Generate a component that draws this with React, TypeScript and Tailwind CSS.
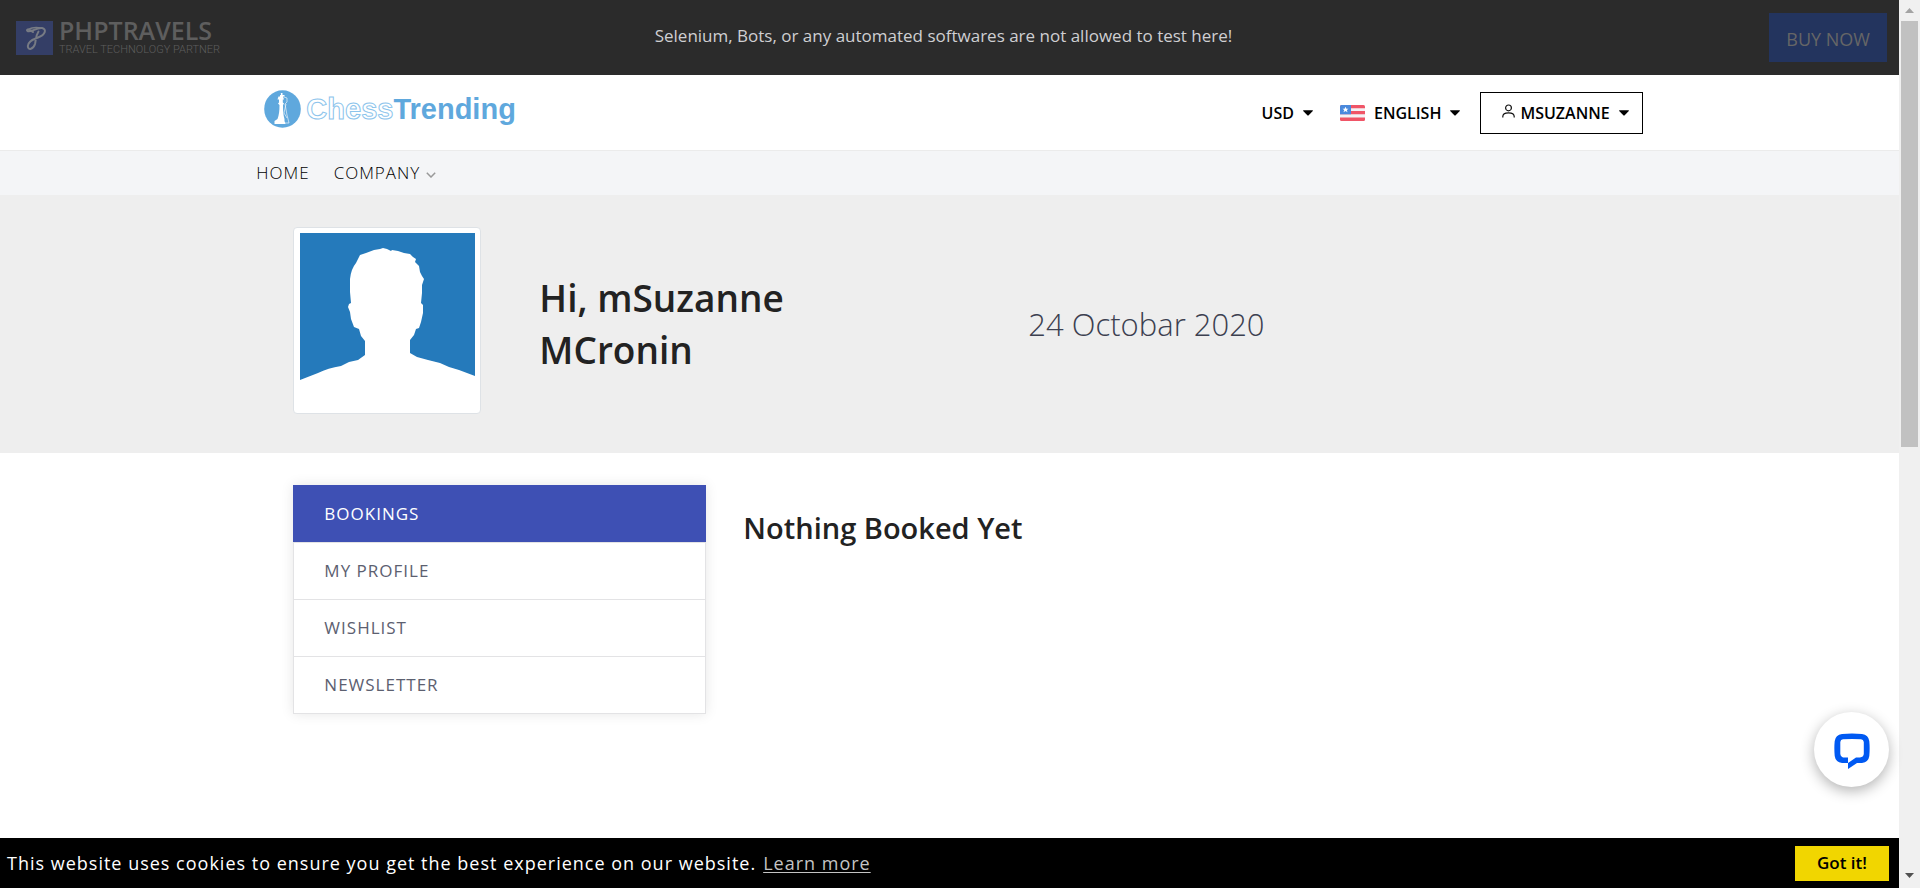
import React from "react";

function Caret() {
  return (
    <svg className="h-[6px] w-[10px]" viewBox="0 0 11 6" aria-hidden="true">
      <path d="M0.6 0h9.8c.5 0 .7.5.4.9L6.2 5.6a1 1 0 0 1-1.4 0L.2.9C-.1.5.1 0 .6 0z" fill="#000" />
    </svg>
  );
}

function PhpLogo() {
  return (
    <a href="#" className="flex items-center gap-[6px] text-[#5e5e5e]">
      <svg className="h-[34px] w-[37px]" viewBox="0 0 37 34" aria-hidden="true">
        <rect width="37" height="34" fill="#343e66" />
        <g fill="none" stroke="#777b84" strokeLinecap="round">
          <path d="M17 11C14 8 9.500 8 11.500 10C14 12 20 6.500 26 7C31 8 29.500 14 22 16.500C17 18.300 12 21 11.800 25C12 30 17.500 28 19 23C20 19 19.500 15 22.500 10.500" strokeWidth="2" />
          <path d="M12 8.500C16 6.300 21 6 25 7" strokeWidth="1.500" />
        </g>
      </svg>
      <span className="flex flex-col pb-px">
        <span className="font-['Open_Sans',sans-serif] text-[25px] font-semibold leading-[25px]">PHPTRAVELS</span>
        <span className="font-['Roboto',sans-serif] text-[11px] font-light leading-[13px]">TRAVEL TECHNOLOGY PARTNER</span>
      </span>
    </a>
  );
}

function ChessLogo() {
  return (
    <a href="#" className="flex items-center gap-[5px] pl-2 font-['Liberation_Sans',sans-serif] text-[29px] font-bold leading-[36px] text-[#5fa8dd]">
      <svg className="h-[38px] w-[37px]" viewBox="0 0 37 38" aria-hidden="true">
        <ellipse cx="18.500" cy="19" rx="18.300" ry="18.800" fill="#5fa8dd" />
        <path d="M16.800 3h1.700v2h2v1.500h-1.500l1 3h-1.200v3l1.200 1-1 1.500c0 6 .3 10 1.500 14v2l1 3H10.500v-3l3-2c1.500-4 2-8 2-14l-1.500-1.500 1-1v-3h-1.500l1-3h1.500v-1.500h1z" fill="#fff" />
        <path d="M20 7l3 1v4l-2 2 2 11 2 8h-5M22 14l-2 9 3 5" fill="none" stroke="#fff" strokeWidth=".8" opacity=".75" />
      </svg>
      <span>
        <span className="text-white [-webkit-text-stroke:1px_#8cc4ec]">Chess</span>Trending
      </span>
    </a>
  );
}

function Flag() {
  return (
    <svg className="h-4 w-[25px]" viewBox="0 0 25 16" aria-hidden="true">
      <clipPath id="flag"><rect width="25" height="16" rx="1.500" /></clipPath>
      <g clipPath="url(#flag)">
        <rect width="25" height="16" fill="#f3f3f5" />
        <path d="M0 0h25v3.200H0zM0 6h25v3.300H0zM0 12.500h25V16H0z" fill="#f05567" />
        <rect width="11" height="9.300" fill="#4a89dc" />
        <path d="M5.500 1.800l.9 2h2.100l-1.700 1.300.7 2.200-2-1.300-2 1.300.7-2.200L2.500 3.800h2.100z" fill="#fff" />
      </g>
    </svg>
  );
}

function Header() {
  return (
    <header className="flex h-[76px] shrink-0 items-center border-b border-[#ebebeb] bg-white">
      <div className="mx-auto flex w-[73%] items-center justify-between">
        <div className="pb-2"><ChessLogo /></div>
        <div className="flex items-center text-[16px] font-semibold text-black">
          <button className="flex items-center gap-[9px]">USD <Caret /></button>
          <button className="ml-[27px] flex items-center gap-[9px]"><Flag /> <span>ENGLISH</span> <Caret /></button>
          <button className="ml-5 flex h-[42px] items-center border border-black pl-[21px] pr-[13px]">
            <svg className="mb-1 mr-[5px] h-[14px] w-[13px]" viewBox="0 0 13 14" fill="none" stroke="#111" strokeWidth="1.200" aria-hidden="true">
              <circle cx="6.500" cy="3.900" r="2.900" />
              <path d="M.8 13.500V12.500C.8 10.200 3.300 8.800 6.500 8.800S12.200 10.200 12.200 12.500V13.500" />
            </svg>
            <span className="mr-[9px]">MSUZANNE</span> <Caret />
          </button>
        </div>
      </div>
    </header>
  );
}

function Avatar() {
  return (
    <div className="rounded-[4px] border border-[#dee2e6] bg-white p-[5px] pl-[6px]">
      <svg className="h-[175px] w-[175px]" viewBox="0 0 175 175" role="img" aria-label="Profile photo">
        <rect width="175" height="175" fill="#257abb" />
        <path fill="#fff" d="M0 147L18 140Q28 135 41 133L49 129L58 127L65 122V108L61 103L59 96L54 94L51 86L50 79L48 74L49 71L51 70L50 59V46Q51 36 56 30L60 22L66 20L74 17L80 16L83 15L87 16L91 18L92 17L98 18L104 20L110 21L113 24L116 26L115 29L119 33L120 39L122 43L124 46L122 52V60L121 70L123 72V80L121 89L119 95L116 96L114 102L110 107V120L117 124L128 127L140 130L149 134L159 137L175 143V175H0z" />
      </svg>
    </div>
  );
}

const items = ["BOOKINGS", "MY PROFILE", "WISHLIST", "NEWSLETTER"];

export default function App() {
  return (
    <div className="flex h-screen overflow-hidden bg-white font-['Open_Sans',sans-serif] text-[#222]">
      <div className="relative flex min-w-0 flex-1 flex-col">
        <div className="flex h-[75px] shrink-0 items-center justify-between bg-[#2b2b2b] px-4 text-[17px]">
          <div className="flex w-[240px]"><PhpLogo /></div>
          <p className="pb-1 font-medium leading-[26px] text-[#cfcfd2]">Selenium, Bots, or any automated softwares are not allowed to test here!</p>
          <div className="flex w-[252px] justify-end">
            <a href="#" className="-mr-1 flex h-[49px] items-center bg-[#23345e] px-[17px] pt-1 text-[18px] font-medium text-[#666]">BUY NOW</a>
          </div>
        </div>
        <Header />
        <nav className="flex h-[44px] shrink-0 items-center bg-[#f4f5f7] pb-px text-[17px] font-light tracking-[1px] text-black">
          <div className="mx-auto flex w-[73%] items-center gap-6">
            <a href="#">HOME</a>
            <a href="#" className="flex items-center gap-[6px]">
              COMPANY
              <svg className="mt-1 h-[6px] w-[10px]" viewBox="0 0 10 6" fill="none" stroke="#999" strokeWidth="1.500" aria-hidden="true"><path d="M.8.8L5 5L9.200.8" /></svg>
            </a>
          </div>
        </nav>
        <section className="h-[258px] shrink-0 bg-[#eee] pt-8">
          <div className="mx-auto flex w-[73%] items-center pl-[37px]">
            <Avatar />
            <h1 className="ml-[58px] w-[310px] pt-[6px] text-[37px] font-semibold leading-[52px]">Hi, mSuzanne MCronin</h1>
            <p className="ml-[179px] pt-[6px] text-[31px] font-light leading-[40px] text-[#3c4050]">24 Octobar 2020</p>
          </div>
        </section>
        <main className="min-h-0 flex-1 overflow-hidden pt-8">
          <div className="mx-auto flex w-[73%] items-start gap-[37px] pl-[37px]">
            <ul className="w-[413px] border border-[#e3e3e5] text-[17px] tracking-[1px] text-[#5c6070] shadow-[0_0_12px_rgba(0,0,0,0.1)]">
              {items.map((item, i) => (
                <li key={item} className={i === 0 ? "-mx-px -mt-px border-b border-[#e3e3e5] bg-[#3e50b4] px-px pt-px text-white" : "border-b border-[#e3e3e5] last:border-b-0"}>
                  <a href="#" className="flex h-14 items-center px-[30px]">{item}</a>
                </li>
              ))}
            </ul>
            <h2 className="pt-[23px] text-[29px] font-semibold leading-[40px]">Nothing Booked Yet</h2>
          </div>
        </main>
        <footer className="flex h-[50px] shrink-0 items-center bg-black pl-[7px] pr-[10px] text-[18px] text-white">
          <p className="flex-1 tracking-[1px]">
            This website uses cookies to ensure you get the best experience on our website.
            <a href="#" className="ml-[7px] text-[#c4c4c4] underline underline-offset-2">Learn more</a>
          </p>
          <button className="h-[35px] w-[94px] bg-[#f1d600] text-[17px] font-semibold text-black">Got it!</button>
        </footer>
        <button aria-label="Open chat" className="absolute bottom-[101px] right-[10px] flex h-[75px] w-[75px] items-center justify-center rounded-full bg-white shadow-[0_4px_14px_rgba(0,0,0,0.3)]">
          <svg className="mt-[3px] h-9 w-9" viewBox="0 0 36 36" aria-hidden="true">
            <path fill="#0059f2" fillRule="evenodd" d="M8 1Q18-.2 28 1Q34.500 2 35.300 8Q36 15 35.300 23Q34.500 29 28 30H23L14 36V30H8Q1.500 29 .7 23Q0 15 .7 8Q1.500 2 8 1zM9 6.300Q6.500 6.500 6.300 9V21Q6.500 24 9 24.500H14V30L22 24.500H26Q29.500 24 29.800 21V9Q29.500 6.500 27 6.300Q18 5.800 9 6.300z" />
          </svg>
        </button>
      </div>
      <div className="flex w-[21px] shrink-0 flex-col items-center bg-[#f0f0f0]" aria-hidden="true">
        <div className="flex h-[21px] items-center"><svg className="h-[5px] w-[9px]" viewBox="0 0 9 5"><path d="M0 5L4.500 0L9 5z" fill="#a3a3a3" /></svg></div>
        <div className="h-[48%] w-[17px] bg-[#c1c1c1]" />
        <div className="mt-auto flex h-[21px] items-center pb-1"><svg className="h-[5px] w-[9px]" viewBox="0 0 9 5"><path d="M0 0h9L4.500 5z" fill="#505050" /></svg></div>
      </div>
    </div>
  );
}
